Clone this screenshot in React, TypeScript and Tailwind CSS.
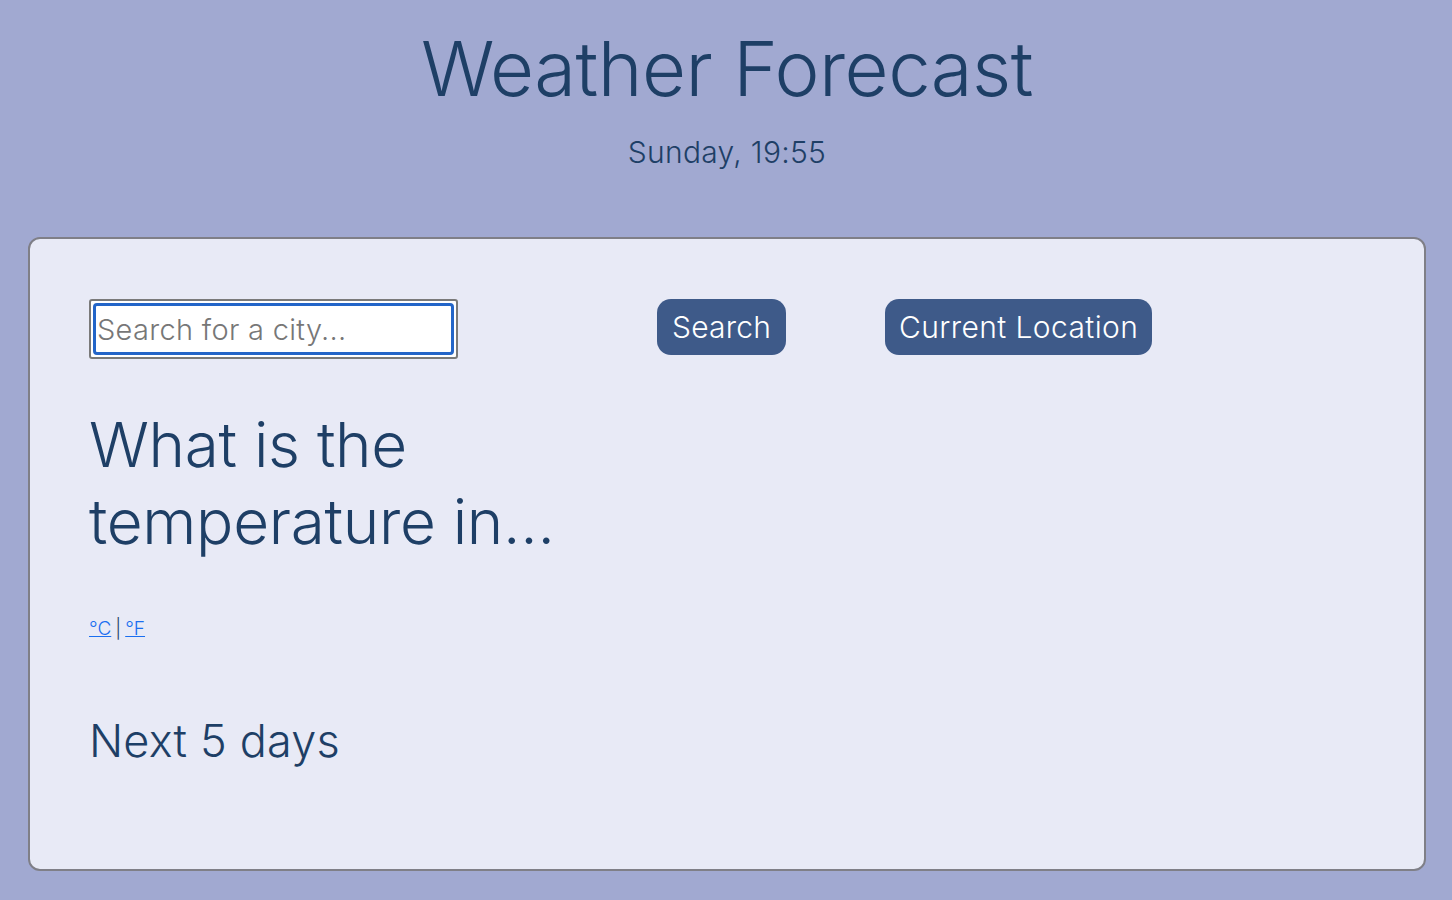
import React from "react";

export default function App() {
  return (
    <div
      className="min-h-[900px] w-full bg-[#a1a9d1] text-[#1e3f66] pl-[28px] pr-[26px] pt-[22px] pb-[28px]"
      style={{ fontFamily: "Inter, 'Noto Sans', sans-serif" }}
    >
      <h1 className="text-center text-[76px] font-light leading-[92px] tracking-[-0.5px]">Weather Forecast</h1>
      <p className="text-center text-[30px] font-light leading-[36px] mt-[20px] tracking-[0.3px]">Sunday, 19:55</p>
      <div className="mt-[67px] h-[634px] rounded-[12px] border-2 border-[#7f7f87] bg-[#e8eaf6] pl-[59px] pr-[60px] pt-[60px]">
        <div className="flex items-start">
          <div className="w-[568px]">
            <div className="w-[369px] h-[60px] rounded-[3px] border-2 border-[#7a7a7a] bg-white p-[2px]">
              <input
                placeholder="Search for a city..."
                className="w-full h-full rounded-[4px] border-[3px] border-[#2365c8] bg-white px-[1px] text-[29px] font-light text-[#333] placeholder:text-[#777] outline-none tracking-[0.3px]"
              />
            </div>
          </div>
          <div className="w-[228px]">
            <button className="h-[56px] rounded-[14px] bg-[#3e5a89] px-[15px] text-[30px] font-light text-white tracking-[0.2px]">Search</button>
          </div>
          <div>
            <button className="h-[56px] rounded-[14px] bg-[#3e5a89] px-[14px] text-[30px] font-light text-white tracking-[0.4px]">Current Location</button>
          </div>
        </div>
        <h2 className="mt-[47px] w-[530px] text-[62px] font-light leading-[77px] tracking-[-0.3px]">What is the temperature in...</h2>
        <div className="mt-[57px] text-[19px] font-light leading-[24px]">
          <a href="#" className="text-[#1a6ef0] underline">°C</a>
          <span className="mx-[4px] text-[#1e3f66]">|</span>
          <a href="#" className="text-[#1a6ef0] underline">°F</a>
        </div>
        <h3 className="mt-[74px] text-[45px] font-light leading-[52px] tracking-[0.2px]">Next 5 days</h3>
      </div>
    </div>
  );
}
